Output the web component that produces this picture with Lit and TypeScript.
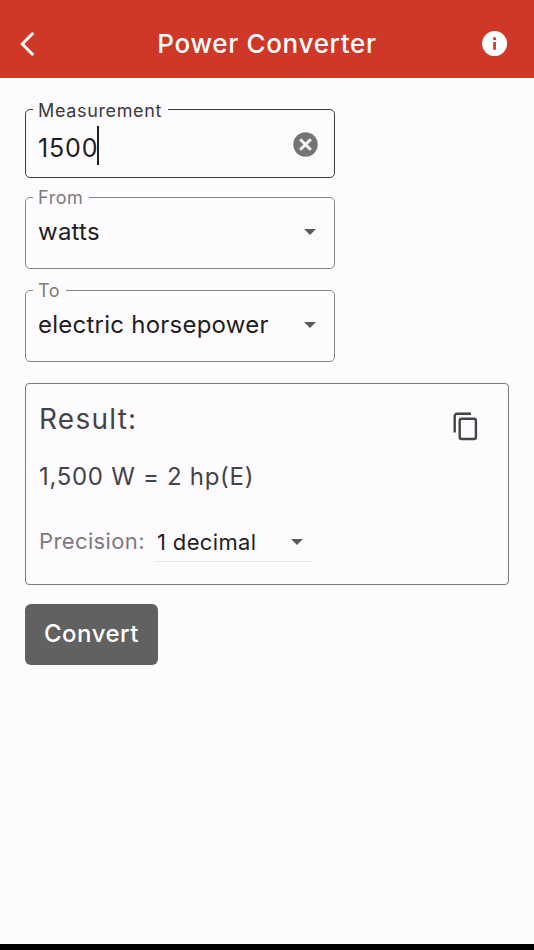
import { LitElement, html, css } from "lit";
import { customElement, property } from "lit/decorators.js";

const caret = html`<svg class="caret" width="12" height="6" viewBox="0 0 12 6">
  <path d="M0 0h12L6 6z" fill="#5b5a5c" />
</svg>`;

@customElement("outlined-field")
class OutlinedField extends LitElement {
  @property() label = "";
  @property({ type: Boolean, reflect: true }) active = false;

  static styles = css`
    :host {
      display: block;
    }
    .box {
      box-sizing: border-box;
      width: 310px;
      height: 82px;
      min-width: 0;
      margin: 0;
      padding: 0 17px 0 7px;
      border: 1px solid #858386;
      border-radius: 5px;
    }
    .label {
      box-sizing: border-box;
      height: 21px;
      line-height: 21px;
      padding: 0 6px 0 5px;
      font-size: 18px;
      letter-spacing: 0.55px;
      color: #7c7a7d;
      white-space: nowrap;
    }
    .content {
      display: flex;
      align-items: center;
      justify-content: space-between;
      height: 47px;
      padding-left: 5px;
    }
    :host([active]) .box {
      height: 79px;
      border-color: #3c3b3e;
    }
    :host([active]) .label {
      line-height: 23px;
      letter-spacing: 0.65px;
      color: #3a393b;
    }
    :host([active]) .content {
      height: 53px;
    }
  `;

  render() {
    return html`<fieldset class="box">
      <legend class="label">${this.label}</legend>
      <div class="content"><slot></slot></div>
    </fieldset>`;
  }
}

@customElement("app-root")
class AppRoot extends LitElement {
  static styles = css`
    :host {
      display: flex;
      flex-direction: column;
      box-sizing: border-box;
      width: 534px;
      height: 950px;
      overflow: hidden;
      background: #fefbff;
      border-bottom: 6px solid #000;
      font-family: Inter, "Liberation Sans", sans-serif;
      color: #1f1e20;
      white-space: nowrap;
    }
    svg {
      display: block;
      flex: none;
    }
    header {
      display: grid;
      grid-template-columns: 40px 1fr 40px;
      align-items: center;
      box-sizing: border-box;
      height: 78px;
      padding: 10px 20px 0;
      background: #cf3729;
      color: #fff;
    }
    h1 {
      margin: 0;
      text-align: center;
      font-size: 26px;
      font-weight: 500;
      line-height: 32px;
      letter-spacing: 0.68px;
    }
    .info {
      justify-self: end;
      margin-right: 6px;
    }
    main {
      display: flex;
      flex-direction: column;
      align-items: flex-start;
      padding: 21px 25px 0;
    }
    .from {
      margin-top: 9px;
    }
    .to {
      margin-top: 11px;
    }
    .value {
      font-size: 24px;
      line-height: 30px;
      letter-spacing: 0.24px;
    }
    .typed {
      display: flex;
      align-items: center;
      height: 39px;
      margin-top: 3px;
      font-size: 25px;
      letter-spacing: 0.85px;
    }
    .cursor {
      width: 2px;
      height: 39px;
      margin: -5px 0 0 -1px;
      background: #1f1e20;
    }
    .caret {
      margin-right: 1px;
    }
    .clear {
      margin: 0 -1px 5px 0;
    }
    .result {
      box-sizing: border-box;
      width: 484px;
      height: 202px;
      margin-top: 21px;
      padding: 14px 30px 0 13px;
      border: 1px solid #7d7b7e;
      border-radius: 4px;
      color: #444346;
    }
    .top {
      display: flex;
      justify-content: space-between;
    }
    h2 {
      margin: 0;
      font-size: 28px;
      font-weight: 400;
      line-height: 42px;
      letter-spacing: 1.25px;
    }
    .copy {
      margin-top: 14px;
    }
    .answer {
      margin-top: 20px;
      font-size: 24px;
      line-height: 32px;
      letter-spacing: 0.7px;
    }
    .precision {
      display: flex;
      margin-top: 29px;
      font-size: 22px;
      line-height: 38px;
    }
    .name {
      width: 118px;
      color: #7c7a7d;
      letter-spacing: 0.38px;
    }
    .select {
      display: flex;
      align-items: center;
      justify-content: space-between;
      box-sizing: border-box;
      width: 155px;
      height: 40px;
      padding-right: 8px;
      border-bottom: 1px solid #e6e3e7;
      color: #1f1e20;
      letter-spacing: 0.35px;
    }
    button {
      width: 133px;
      height: 61px;
      margin-top: 19px;
      padding: 0 0 2px;
      border: 0;
      border-radius: 6px;
      background: #616161;
      color: #fff;
      font: 500 24px Inter, sans-serif;
      letter-spacing: 0.5px;
    }
  `;

  render() {
    return html`
      <header>
        <svg width="16" height="26" viewBox="0 0 16 26">
          <path d="M13.2 2 2.3 13l10.9 11" fill="none" stroke="#fff" stroke-width="3" />
        </svg>
        <h1>Power Converter</h1>
        <svg class="info" width="26" height="26" viewBox="0 0 26 26">
          <circle cx="12.6" cy="12.6" r="12.5" fill="#fff" />
          <path d="M11.2 6.3h2.7v2.6h-2.7zM11.2 11.1h2.7v7.7h-2.7z" fill="#cf3729" />
        </svg>
      </header>
      <main>
        <outlined-field label="Measurement" active>
          <span class="typed">1500<span class="cursor"></span></span>
          <svg class="clear" width="25" height="25" viewBox="0 0 25 25">
            <circle cx="12.5" cy="12.5" r="12.2" fill="#757475" />
            <path d="m7.2 7.2 10.6 10.6M17.8 7.2 7.2 17.8" stroke="#fefbff" stroke-width="2.9" />
          </svg>
        </outlined-field>
        <outlined-field class="from" label="From">
          <span class="value">watts</span>${caret}
        </outlined-field>
        <outlined-field class="to" label="To">
          <span class="value">electric horsepower</span>${caret}
        </outlined-field>
        <section class="result">
          <div class="top">
            <h2>Result:</h2>
            <svg class="copy" width="25" height="29" viewBox="0 0 25 29">
              <g fill="none" stroke="#444346" stroke-width="2.4">
                <path d="M1.7 20.5V4.1a2.3 2.3 0 0 1 2.3-2.3H18" />
                <rect x="6.7" y="6.7" width="16.2" height="20.3" rx="2" />
              </g>
            </svg>
          </div>
          <div class="answer">1,500 W = 2 hp(E)</div>
          <div class="precision">
            <span class="name">Precision:</span>
            <span class="select">1 decimal${caret}</span>
          </div>
        </section>
        <button>Convert</button>
      </main>
    `;
  }
}
